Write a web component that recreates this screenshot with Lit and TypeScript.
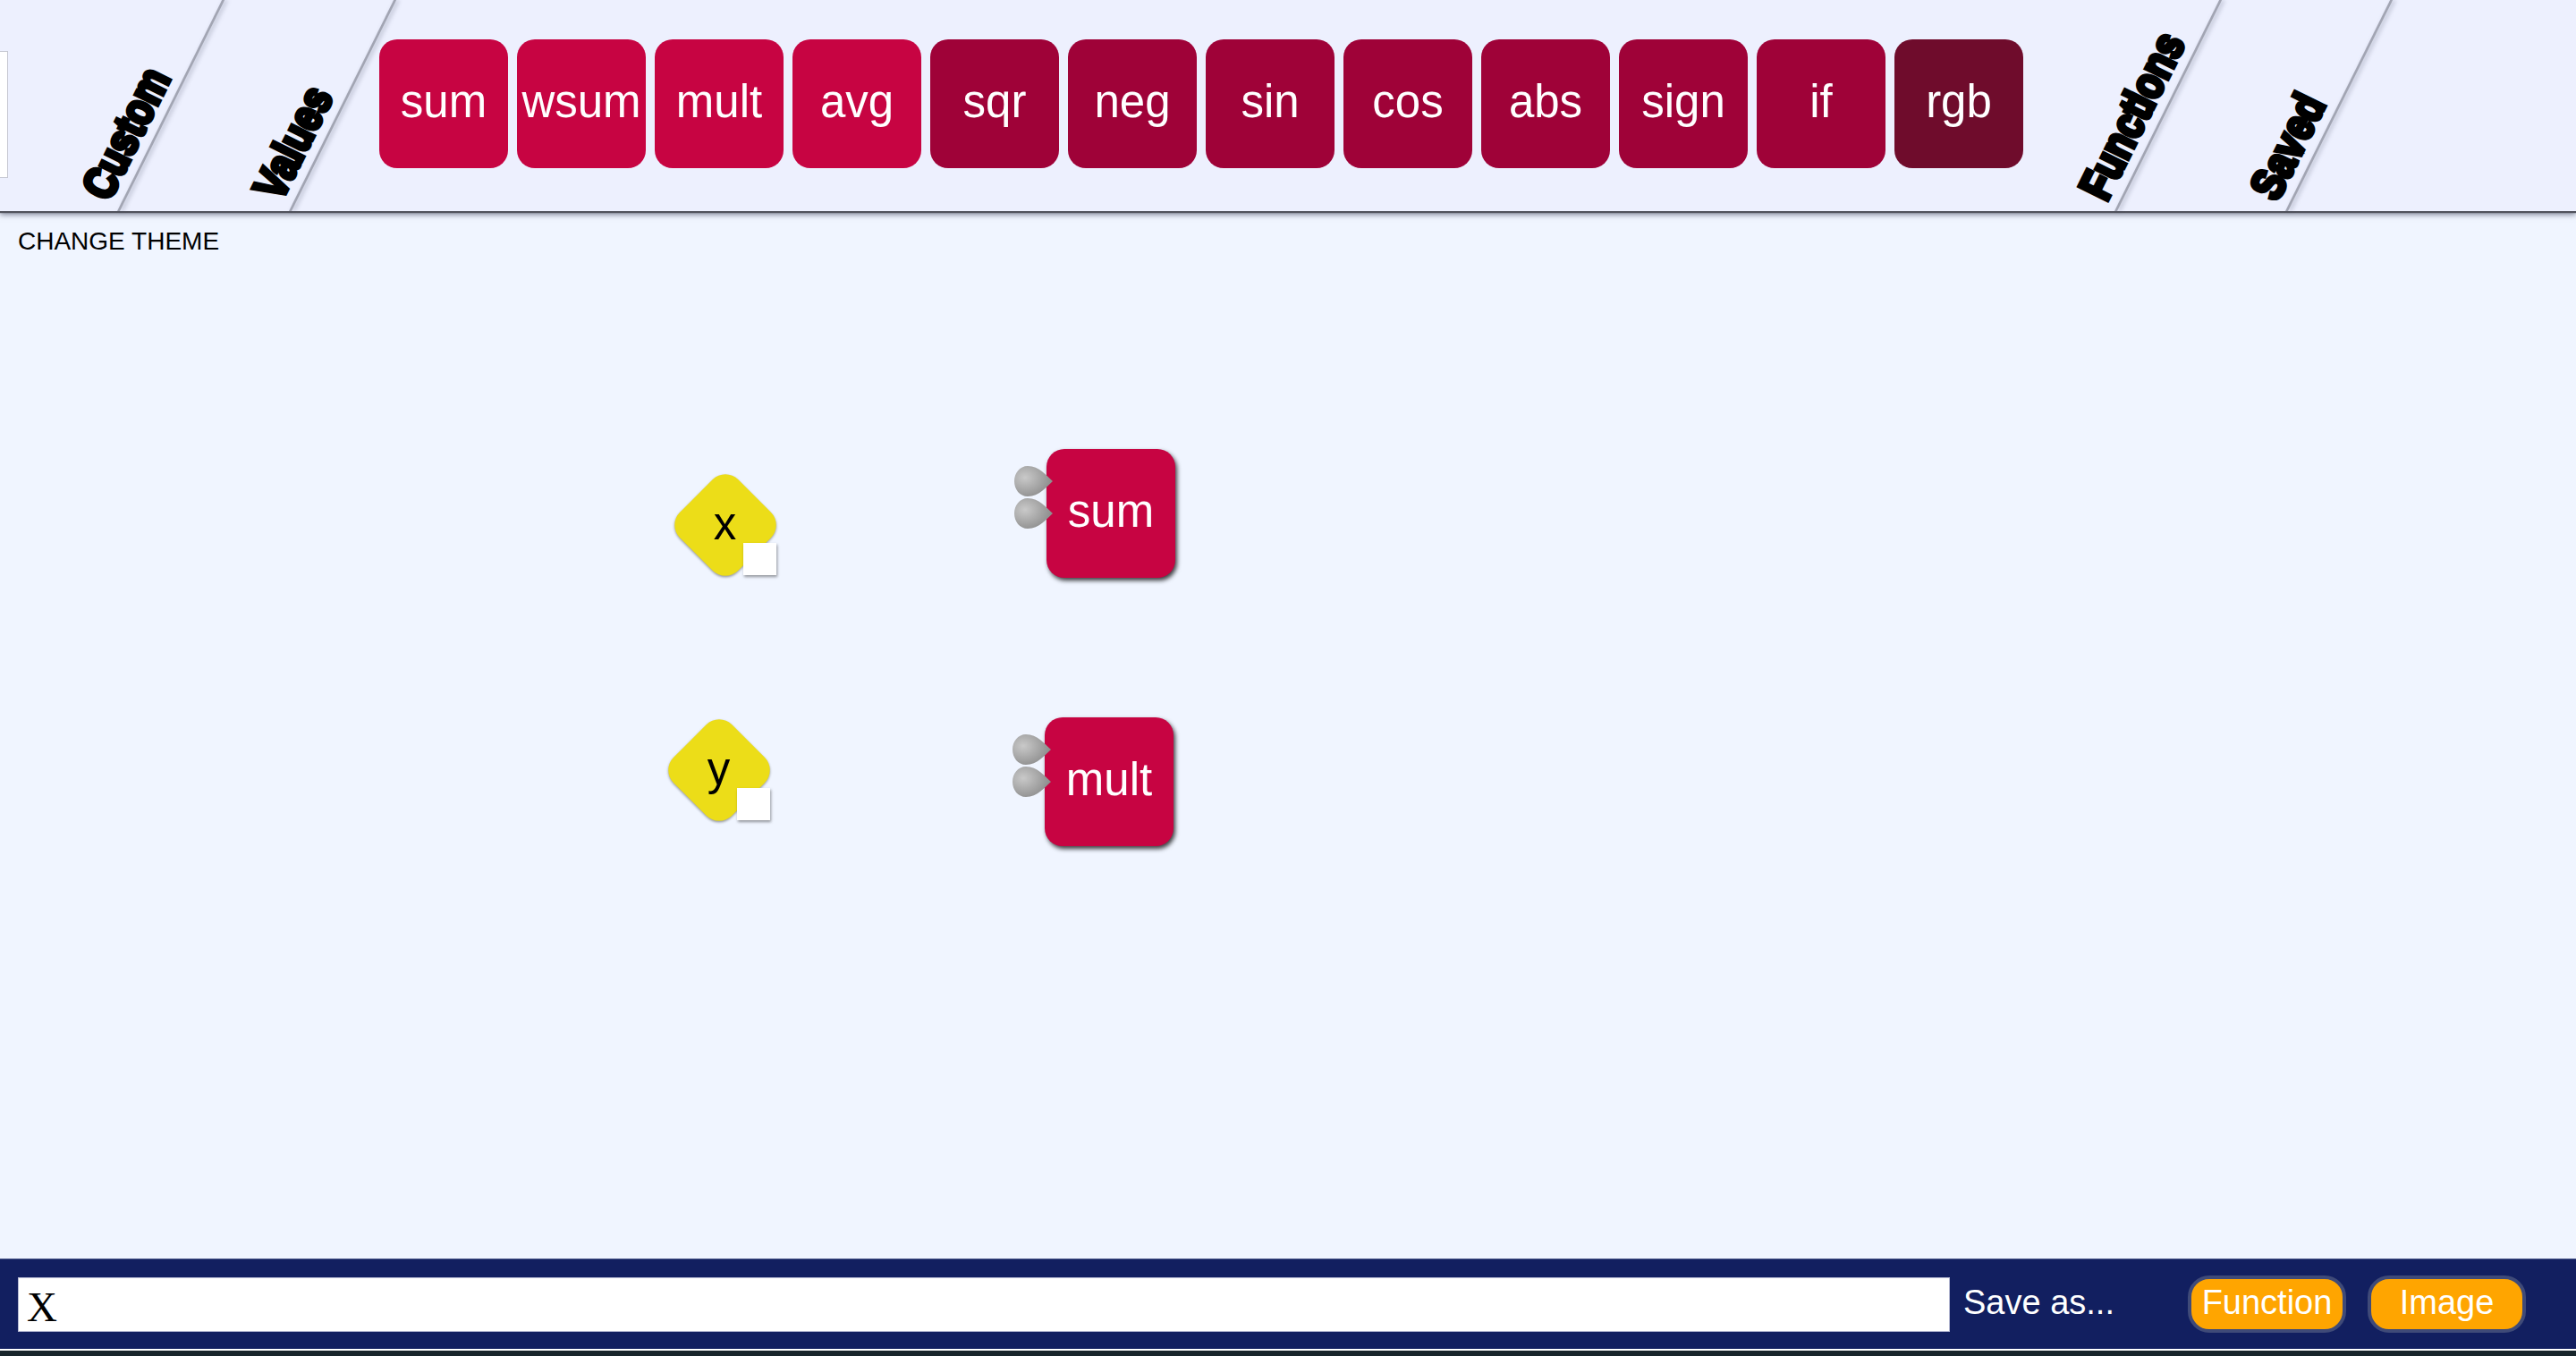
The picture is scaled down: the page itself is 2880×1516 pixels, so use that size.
import { LitElement, css, html, svg } from "lit";
import { customElement } from "lit/decorators.js";

const SOFT_FUNCS = ["sum", "wsum", "mult", "avg"];
const DARK_FUNCS = ["sqr", "neg", "sin", "cos", "abs", "sign", "if"];

const VALUES = [
  { name: "x", left: 754, top: 294 },
  { name: "y", left: 747, top: 568 },
];

const NODES = [
  { name: "sum", left: 1170, top: 266 },
  { name: "mult", left: 1168, top: 566 },
];

const port = (cls: string) => html`
  <svg class="port ${cls}" viewBox="0 0 43 34" width="43" height="34">
    ${svg`
      <defs>
        <radialGradient id="drop" cx="0.28" cy="0.38" r="0.8">
          <stop offset="0" stop-color="#c9c9c9" />
          <stop offset="1" stop-color="#858585" />
        </radialGradient>
      </defs>
      <path
        d="M43 17C36 23 28 34 15 34C6 34 0 26 0 17C0 8 6 0 15 0C28 0 36 11 43 17Z"
        fill="url(#drop)"
      />
    `}
  </svg>
`;

/** Editor page: palette on top, free canvas in the middle, save bar below. */
@customElement("app-root")
export class AppRoot extends LitElement {
  static styles = css`
    :host {
      display: flex;
      flex-direction: column;
      height: 100vh;
      font-family: "Liberation Sans", Arial, sans-serif;
      background: #f0f5ff;
      overflow: hidden;
    }

    .palette {
      display: flex;
      flex: none;
      align-items: center;
      height: 236px;
      background: #edf0fe;
      box-shadow: 0 2px 1px #50525c, 0 4px 6px rgba(40, 44, 70, 0.55);
      position: relative;
      z-index: 1;
    }

    .stub {
      flex: none;
      box-sizing: border-box;
      width: 9px;
      height: 142px;
      margin-top: 20px;
      background: #fff;
      border: 1px solid #c6c8d2;
      border-left: none;
    }

    .tab {
      flex: none;
      display: flex;
      justify-content: flex-end;
      align-items: flex-end;
      align-self: stretch;
      position: relative;
    }

    .tab::after {
      content: "";
      position: absolute;
      right: -1px;
      top: 0;
      bottom: 0;
      width: 3px;
      background: #a2a5b3;
      box-shadow: 3px 0 5px rgba(80, 85, 110, 0.4);
      transform-origin: 50% 100%;
      transform: skewX(-26.4deg);
    }

    .tab-custom {
      width: 124px;
    }

    .tab-values {
      width: 192px;
    }

    .tab-functions {
      width: 104px;
    }

    .tab-saved {
      width: 191px;
    }

    /* no Impact here: bold sans, thickened and squeezed */
    .tab-label {
      width: 0;
      margin: 0 4px 6px 0;
      font-size: 51px;
      font-weight: 700;
      line-height: 51px;
      color: #000;
      white-space: nowrap;
      -webkit-text-stroke: 5px #000;
      transform-origin: 0 100%;
      transform: rotate(-63.6deg) scaleX(0.82);
    }

    .funcs {
      display: flex;
      flex: none;
      gap: 10px;
      padding-left: 99px;
      margin-top: -4px;
    }

    .func {
      flex: none;
      box-sizing: border-box;
      display: flex;
      align-items: center;
      justify-content: center;
      width: 144px;
      height: 144px;
      padding-bottom: 5px;
      border-radius: 20px;
      color: #fff;
      font-size: 51px;
      background: #c70442;
    }

    .func.dark {
      background: #9f0238;
    }

    .func.deep {
      background: #6f0c2c;
    }

    .canvas {
      flex: 1;
      position: relative;
    }

    .theme {
      padding: 18px 20px 0;
      font-size: 28px;
      color: #000;
    }

    .node {
      position: absolute;
      box-shadow: 2px 3px 5px rgba(0, 0, 0, 0.75);
    }

    .port {
      position: absolute;
      left: -36px;
    }

    .port.first {
      top: 19px;
    }

    .port.second {
      top: 55px;
    }

    .value {
      position: absolute;
      width: 113px;
      height: 113px;
      display: flex;
      align-items: center;
      justify-content: center;
      padding-bottom: 3px;
      box-sizing: border-box;
      font-size: 51px;
      color: #000;
    }

    .value span {
      position: relative;
    }

    .diamond {
      position: absolute;
      left: 10.5px;
      top: 10.5px;
      width: 92px;
      height: 92px;
      border-radius: 20px;
      background: #ecdd18;
      box-shadow: 1px 1px 3px rgba(0, 0, 0, 0.4);
      transform: rotate(45deg);
    }

    .handle {
      position: absolute;
      right: -1px;
      bottom: 0;
      width: 37px;
      height: 36px;
      background: #fff;
      box-shadow: 1px 2px 3px rgba(0, 0, 0, 0.4);
    }

    .savebar {
      flex: none;
      box-sizing: border-box;
      display: flex;
      align-items: center;
      height: 103px;
      padding: 0 20px;
      background: #121f60;
      border-top: 1px solid #4c5789;
      border-bottom: 2px solid #fff;
    }

    .name {
      flex: none;
      box-sizing: border-box;
      width: 2160px;
      height: 61px;
      padding: 6px 9px 0;
      border: 1px solid #b6b9d2;
      outline: none;
      background: #fff;
      color: #000;
      font-family: "Liberation Serif", "Times New Roman", serif;
      font-size: 47px;
    }

    .save-as {
      flex: none;
      width: 266px;
      padding: 0 0 3px 15px;
      box-sizing: border-box;
      color: #fff;
      font-size: 38px;
    }

    .actions {
      display: flex;
      gap: 24px;
    }

    .action {
      box-sizing: border-box;
      width: 177px;
      height: 64px;
      padding: 0 0 3px;
      border: 4px solid #3f4a78;
      border-radius: 24px;
      background: #ffa500;
      color: #fff;
      font-family: inherit;
      font-size: 38px;
    }

    .strip {
      flex: none;
      height: 6px;
      background: #18252b;
    }
  `;

  render() {
    return html`
      <header class="palette">
        <div class="stub"></div>
        <div class="tab tab-custom"><span class="tab-label">Custom</span></div>
        <div class="tab tab-values"><span class="tab-label">Values</span></div>
        <div class="funcs">
          ${SOFT_FUNCS.map((f) => html`<div class="func">${f}</div>`)}
          ${DARK_FUNCS.map((f) => html`<div class="func dark">${f}</div>`)}
          <div class="func deep">rgb</div>
        </div>
        <div class="tab tab-functions"><span class="tab-label">Functions</span></div>
        <div class="tab tab-saved"><span class="tab-label">Saved</span></div>
      </header>

      <main class="canvas">
        <div class="theme">CHANGE THEME</div>
        ${VALUES.map(
          (v) => html`
            <div class="value" style="left:${v.left}px;top:${v.top}px">
              <div class="diamond"></div>
              <span>${v.name}</span>
              <div class="handle"></div>
            </div>
          `
        )}
        ${NODES.map(
          (n) => html`
            <div class="func node" style="left:${n.left}px;top:${n.top}px">
              ${n.name} ${port("first")} ${port("second")}
            </div>
          `
        )}
      </main>

      <footer class="savebar">
        <input class="name" value="X" />
        <div class="save-as">Save as...</div>
        <div class="actions">
          <button class="action">Function</button>
          <button class="action">Image</button>
        </div>
      </footer>
      <div class="strip"></div>
    `;
  }
}
